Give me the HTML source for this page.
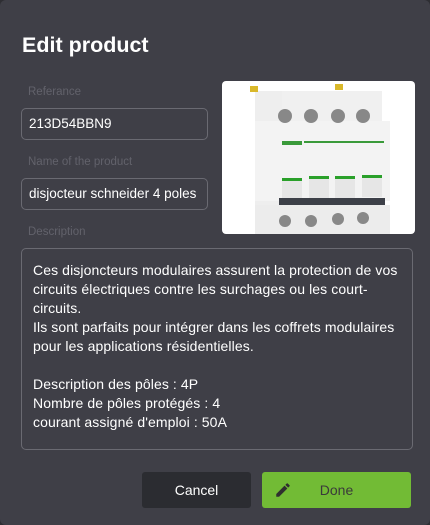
<!DOCTYPE html>
<html><head><meta charset="utf-8"><style>
*{margin:0;padding:0;box-sizing:border-box}
html,body{width:430px;height:525px;overflow:hidden;background:#2e2e33}
body{font-family:"Liberation Sans","DejaVu Sans",sans-serif}
.d{position:absolute;left:0;top:0;width:430px;height:525px;background:#3f3f47;border-radius:6px}
.t{position:absolute;left:22px;top:33px;font-size:21.5px;font-weight:bold;color:#fff}
.l{position:absolute;left:28px;font-size:11.5px;color:#62626b}
.i{position:absolute;left:21px;width:187px;height:32px;border:1px solid #6a6a72;border-radius:5px;color:#fff;font-size:13.5px;padding-left:7px;line-height:30px;white-space:nowrap;overflow:hidden}
.img{position:absolute;left:222px;top:81px;width:193px;height:153px;background:#fff;border-radius:4px;overflow:hidden}
.ta{position:absolute;left:21px;top:248px;width:392px;height:202px;border:1px solid #6a6a72;border-radius:5px;color:#fff;font-size:14px;letter-spacing:0.1px;line-height:19px;padding:12px 11px}
.b{position:absolute;top:472px;height:36px;border-radius:3px;font-size:14px;line-height:36px;text-align:center}
</style></head><body>
<div class="d">
<div class="t">Edit product</div>
<div class="l" style="top:86px">Referance</div>
<div class="i" style="top:108px">213D54BBN9</div>
<div class="l" style="top:156px">Name of the product</div>
<div class="i" style="top:178px">disjocteur schneider 4 poles</div>
<div class="l" style="top:226px">Description</div>
<div class="img"><svg width="193" height="153" viewBox="0 0 193 153">
<rect x="33" y="10" width="100" height="140" fill="#eeeeee"/>
<rect x="28" y="5" width="8" height="6" fill="#d9b82a"/><rect x="113" y="3" width="8" height="6" fill="#d9b82a"/>
<rect x="33" y="40" width="135" height="80" fill="#f3f3f3"/>
<rect x="60" y="10" width="100" height="30" fill="#f0f0f0"/>
<circle cx="63" cy="35" r="7" fill="#888"/><circle cx="89" cy="35" r="7" fill="#888"/><circle cx="116" cy="35" r="7" fill="#888"/><circle cx="141" cy="35" r="7" fill="#888"/>
<rect x="82" y="60" width="80" height="2" fill="#3a9a3a"/><rect x="60" y="60" width="20" height="4" fill="#3a9a3a"/>
<rect x="60" y="97" width="20" height="22" fill="#e6e6e6"/><rect x="87" y="95" width="20" height="22" fill="#e6e6e6"/><rect x="113" y="95" width="20" height="22" fill="#e6e6e6"/><rect x="140" y="94" width="20" height="22" fill="#e6e6e6"/>
<rect x="60" y="97" width="20" height="3" fill="#2aa02a"/><rect x="87" y="95" width="20" height="3" fill="#2aa02a"/><rect x="113" y="95" width="20" height="3" fill="#2aa02a"/><rect x="140" y="94" width="20" height="3" fill="#2aa02a"/>
<rect x="57" y="117" width="106" height="7" fill="#3d4048"/>
<rect x="33" y="124" width="135" height="29" fill="#ececec"/>
<circle cx="63" cy="140" r="6" fill="#888"/><circle cx="89" cy="140" r="6" fill="#888"/><circle cx="116" cy="138" r="6" fill="#888"/><circle cx="141" cy="137" r="6" fill="#888"/>
</svg></div>
<div class="ta">Ces disjoncteurs modulaires assurent la protection de vos circuits électriques contre les surchages ou les court-circuits.<br>Ils sont parfaits pour intégrer dans les coffrets modulaires pour les applications résidentielles.<br><br>Description des pôles : 4P<br>Nombre de pôles protégés : 4<br>courant assigné d'emploi : 50A</div>
<div class="b" style="left:142px;width:109px;background:#2b2c31;color:#fff">Cancel</div>
<div class="b" style="left:262px;width:149px;background:#72bb35;color:#3a3a3a">
<svg style="position:absolute;left:12px;top:9px" width="18" height="18" viewBox="0 0 24 24"><path d="M3 17.25V21h3.75L17.81 9.94l-3.75-3.75L3 17.25zM20.71 7.04a1 1 0 000-1.41l-2.34-2.34a1 1 0 00-1.41 0l-1.83 1.83 3.75 3.75 1.83-1.83z" fill="#2f2f2f"/></svg>Done</div>
</div>
</body></html>
